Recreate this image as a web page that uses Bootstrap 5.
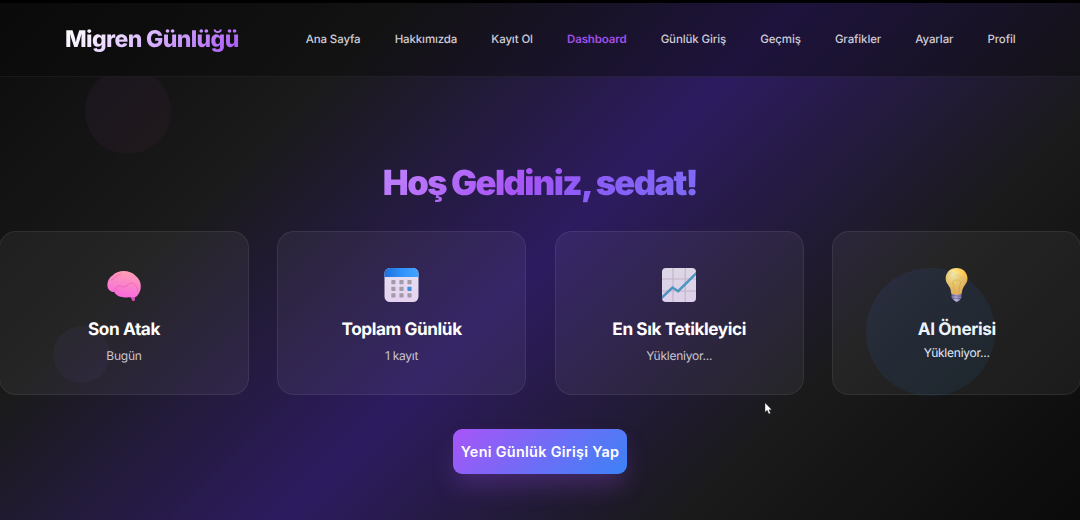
<!DOCTYPE html>
<html lang="tr">
<head>
<meta charset="utf-8">
<meta name="viewport" content="width=device-width, initial-scale=1">
<title>Migren Günlüğü</title>
<link href="https://cdn.jsdelivr.net/npm/bootstrap@5.3.0/dist/css/bootstrap.min.css" rel="stylesheet">
<style>
body{font-family:Inter,"Liberation Sans",sans-serif;font-size:12px;color:#fff;height:520px;overflow:hidden;background:#000;border-top:3px solid #000;text-rendering:geometricPrecision}
.page{height:517px;background:linear-gradient(135deg,#0c0c0c 0%,#1a1a1a 25%,#2d1b60 50%,#1a1a1a 75%,#0a0a0a 100%)}
.topbar{height:74px;padding:0 65px;background:rgba(8,8,8,.4);border-bottom:1px solid rgba(255,255,255,.06);z-index:3}
.brand{font-size:23px;font-weight:800;letter-spacing:-.62px;line-height:30px;width:174px;margin-top:-1px;background:linear-gradient(135deg,#fff 0%,#f3e8ff 22%,#d8b4fe 50%,#a855f7 100%);-webkit-background-clip:text;background-clip:text;color:transparent}
.menu{margin-left:67px;margin-top:-1px;gap:34.1px;font-size:11.5px;letter-spacing:-.12px;line-height:18px}
.menu .nav-link{padding:0;color:#cfccd6;font-weight:500}
.menu .nav-link.active{color:#a04fe8;font-weight:600}
.hello{font-size:34.6px;font-weight:900;letter-spacing:-1.62px;line-height:42px;margin:85px 0 0;background:linear-gradient(135deg,#c084fc 0%,#a855f7 45%,#8b5cf6 65%,#7c6cf6 100%);-webkit-background-clip:text;background-clip:text;color:transparent}
.tiles{display:grid;grid-template-columns:repeat(4,249.2px);gap:28.4px;margin:27px 0 0 -.6px}
.tile{height:164px;padding-top:35px;border-radius:17px;background:rgba(255,255,255,.05);border:1px solid rgba(255,255,255,.07)}
.tile svg{width:36px;height:36px}
.tile h2{font-size:17.2px;font-weight:700;letter-spacing:-.4px;line-height:22px;margin:16px 0 0}
.tile p{font-size:12px;letter-spacing:-.24px;line-height:18px;margin:6px 0 0;color:#c9c6d0}
.tile .tip{margin-top:3px;color:#f0f3fb}
.cta{width:174px;height:45px;margin-top:34px;padding:0;border:0;border-radius:9px;color:#fff;font-size:14.4px;font-weight:600;letter-spacing:.3px;background:linear-gradient(135deg,#a855f7,#3b82f6);box-shadow:0 14px 24px -3px rgba(168,85,247,.25);white-space:nowrap}
.orb{position:absolute;border-radius:50%;pointer-events:none}
.orb-a{left:85px;top:65px;width:86px;height:86px;clip-path:inset(9px 0 0 0);background:linear-gradient(135deg,rgba(168,85,247,.06),rgba(236,72,153,.04))}
.orb-b{left:53px;top:323px;width:57px;height:57px;background:rgba(139,92,246,.05)}
.orb-c{left:866px;top:265px;width:129px;height:128px;background:linear-gradient(135deg,rgba(59,100,246,.10),rgba(30,140,220,.08));z-index:2}
.pointer{position:absolute;left:764px;top:399px;width:8px;height:13px}
</style>
</head>
<body>
<div class="page position-relative overflow-hidden">
  <span class="orb orb-a"></span><span class="orb orb-b"></span><span class="orb orb-c"></span>
  <header class="topbar position-relative d-flex align-items-center">
    <a class="brand text-decoration-none text-nowrap" href="#">Migren Günlüğü</a>
    <nav class="menu nav flex-nowrap text-nowrap">
      <a class="nav-link" href="#">Ana Sayfa</a>
      <a class="nav-link" href="#">Hakkımızda</a>
      <a class="nav-link" href="#">Kayıt Ol</a>
      <a class="nav-link active" href="#">Dashboard</a>
      <a class="nav-link" href="#">Günlük Giriş</a>
      <a class="nav-link" href="#">Geçmiş</a>
      <a class="nav-link" href="#">Grafikler</a>
      <a class="nav-link" href="#">Ayarlar</a>
      <a class="nav-link" href="#">Profil</a>
    </nav>
  </header>
  <main class="d-flex flex-column align-items-center position-relative">
    <h1 class="hello text-nowrap">Hoş Geldiniz, sedat!</h1>
    <section class="tiles align-self-start text-center">
      <article class="tile">
        <svg viewBox="0 0 36 36"><defs><linearGradient id="br" x1=".6" y1="0" x2=".35" y2="1"><stop stop-color="#ff9fb0"/><stop offset=".5" stop-color="#fa84cc"/><stop offset="1" stop-color="#fb66dc"/></linearGradient></defs>
          <path d="M24 29l2.700 5.300 2-.5.600-5z" fill="#d64fbc"/>
          <path d="M1.500 19.500C1 14 3.500 10.500 6.500 8.500 9 5.500 13.500 4 17.500 4c5 0 9 1.500 11.800 4.500 4 3 5.700 7 5.500 11 0 4-1.800 7.500-4.300 10-3 1.200-5 .8-8 .8-4 .5-9.500 0-12-2.500-1.200-.9-1.700-1.800-2.200-2.800C5 25 2 23 1.500 19.500z" fill="url(#br)"/>
          <path d="M5.500 13c2.500-.5 3-3 5-4s2.500-1.500 4-2M9 24.500c-.5-4 3-6.500 7-5 2.500 1 5.500.5 6-2 1.500-2 5-2 7 .5 2 2 3 4 2.500 6" fill="none" stroke="#dc55a5" stroke-width="1" stroke-linecap="round" opacity=".55"/></svg>
        <h2>Son Atak</h2><p>Bugün</p>
      </article>
      <article class="tile">
        <svg viewBox="0 0 36 36"><defs><linearGradient id="ca" x1="0" x2="1"><stop stop-color="#1e70dc"/><stop offset=".5" stop-color="#2e92fa"/><stop offset="1" stop-color="#43a5ff"/></linearGradient><linearGradient id="cb" x1="0" y1="0" x2="0" y2="1"><stop stop-color="#e4dff3"/><stop offset="1" stop-color="#e6d2ef"/></linearGradient></defs>
          <rect x=".5" y="1" width="34" height="34" rx="5.500" fill="url(#cb)"/><path d="M.5 10V6.500A5.500 5.500 0 0 1 6 1h23A5.500 5.500 0 0 1 34.500 6.500V10z" fill="url(#ca)"/>
          <g fill="#a39aaa"><rect x="7.300" y="13" width="4.200" height="4.200" rx=".7"/><rect x="15.400" y="13" width="4.200" height="4.200" rx=".7"/><rect x="23.400" y="13" width="4.200" height="4.200" rx=".7"/><rect x="7.300" y="19.700" width="4.200" height="4.200" rx=".7"/><rect x="15.400" y="19.700" width="4.200" height="4.200" rx=".7"/><rect x="23.400" y="19.700" width="4.200" height="4.200" rx=".7" fill="#3d91dc"/><rect x="7.300" y="26.200" width="4.200" height="4.200" rx=".7"/><rect x="15.400" y="26.200" width="4.200" height="4.200" rx=".7"/><rect x="23.400" y="26.200" width="4.200" height="4.200" rx=".7"/></g></svg>
        <h2>Toplam Günlük</h2><p>1 kayıt</p>
      </article>
      <article class="tile">
        <svg viewBox="0 0 36 36"><defs><clipPath id="cp"><rect x="1" y="1" width="34" height="34" rx="4"/></clipPath><linearGradient id="cg" x1="0" y1="0" x2="0" y2="1"><stop stop-color="#dcd7e5"/><stop offset="1" stop-color="#ded0ea"/></linearGradient></defs>
          <g clip-path="url(#cp)"><rect width="36" height="36" fill="url(#cg)"/><path d="M12 0v36M24.200 0v36M0 12h36M0 24h36" stroke="#c2b3c5" stroke-width="1.100"/><path d="M0 31.500L11.500 20.500l5.700 3.700L36 5.500" fill="none" stroke="#4d94c4" stroke-width="2.500"/></g></svg>
        <h2>En Sık Tetikleyici</h2><p>Yükleniyor...</p>
      </article>
      <article class="tile">
        <svg viewBox="0 0 36 36"><defs><radialGradient id="bu" cx=".35" cy=".25" r=".85"><stop stop-color="#fff1a6"/><stop offset=".4" stop-color="#fbd062"/><stop offset="1" stop-color="#eeaa42"/></radialGradient><linearGradient id="bs"><stop stop-color="#776b99"/><stop offset=".45" stop-color="#c9bddd"/><stop offset="1" stop-color="#776a91"/></linearGradient></defs>
          <g transform="translate(-.5 0)"><path d="M13 26h10v4.500l-2 3-2.700 1.500-2.800-1.500-2.500-3z" fill="url(#bs)"/><path d="M13.500 28.500l9 .8M14 31l8 .5" stroke="#665a85" stroke-width=".8"/>
          <path d="M18 1C11.500 1 7.200 5.700 7.200 11.500c0 4 2.800 6.300 4.300 9.300.9 2 .8 4 1.200 5.700 2 1.300 8.600 1.300 10.500 0 .4-1.700.5-3.700 1.500-5.700 1.500-3 4.300-5.300 4.300-9.300C29 5.700 24.600 1 18 1z" fill="url(#bu)"/>
          <path d="M16 25l-1-7c-2-3 0-5 3.200-5s5.200 2 3.200 5l-1 7" fill="none" stroke="#dc982f" stroke-width=".9" opacity=".5"/></g></svg>
        <h2>AI Önerisi</h2><p class="tip">Yükleniyor...</p>
      </article>
    </section>
    <button class="cta btn">Yeni Günlük Girişi Yap</button>
  </main>
  <svg class="pointer" viewBox="0 0 8 13"><path d="M1 .8v9.400l2.200-2L4.800 12l1.700-.7L5 7.800h2.800z" fill="#fff" stroke="#222" stroke-width=".4"/></svg>
</div>
<script src="https://cdn.jsdelivr.net/npm/bootstrap@5.3.0/dist/js/bootstrap.bundle.min.js"></script>
</body>
</html>
